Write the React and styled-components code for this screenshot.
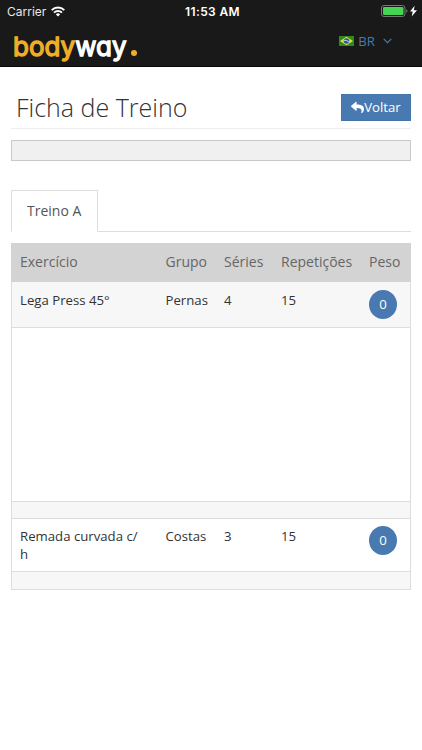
import React from 'react'
import styled, { createGlobalStyle } from 'styled-components'
import { FaReply } from 'react-icons/fa'

const exercises = [
  { name: 'Lega Press 45°', group: 'Pernas', sets: 4, reps: 15, weight: 0, height: 46, top: 9, shaded: true, media: true },
  { name: 'Remada curvada c/h', group: 'Costas', sets: 3, reps: 15, weight: 0, height: 53, top: 8 },
]

const Wifi = () => (
  <svg width="14" height="11" viewBox="0 0 14 11" fill="none" stroke="#fff" strokeWidth="1.9">
    <path d="M0.7 4.1a9 9 0 0 1 12.6 0" />
    <path d="M3 6.6a5.7 5.7 0 0 1 8 0" />
    <path d="M7 10.6L4.9 8.4a3 3 0 0 1 4.2 0z" fill="#fff" stroke="none" />
  </svg>
)

const Battery = () => (
  <svg width="36" height="13" viewBox="0 0 36 13">
    <rect x="0.5" y="0.5" width="23.5" height="11" rx="2.5" fill="none" stroke="#777" />
    <rect x="2" y="2" width="20.5" height="8" rx="1.2" fill="#45d553" />
    <path d="M25.2 4.3v3.4q1.3-.6 1.3-1.7t-1.3-1.7z" fill="#777" />
    <path d="M33.6 0.8L29 6.6h2.7l-1 4.8L36 5.2h-3.2z" fill="#fff" />
  </svg>
)

const Flag = () => (
  <svg width="15" height="10" viewBox="0 0 15 10">
    <rect width="15" height="10" fill="#2c8a22" />
    <path d="M7.5 0.7L14 5L7.5 9.3L1 5z" fill="#e5de3c" />
    <circle cx="7.5" cy="5" r="2.8" fill="#285a9f" />
    <path d="M4.9 4.3q3-.4 5.2 1.7" fill="none" stroke="#cfe2ee" strokeWidth="0.9" />
  </svg>
)

const App = () => {
  return (
    <>
      <GlobalStyle />
      <Header>
        <StatusBar>
          <Carrier>Carrier <Wifi /></Carrier>
          <Clock>11:53 AM</Clock>
          <Battery />
        </StatusBar>
        <NavBar>
          <Logo>
            <LogoPart $color="#f0ae27">body</LogoPart>
            <LogoPart $color="#fff">way</LogoPart>
            <LogoDot />
          </Logo>
          <Language>
            <Flag />
            <span>BR</span>
            <svg width="9" height="6" viewBox="0 0 9 6" fill="none" stroke="#467bb0" strokeWidth="1.2">
              <path d="M0.7 0.8l3.8 3.9l3.8-3.9" />
            </svg>
          </Language>
        </NavBar>
      </Header>

      <Content>
        <TitleRow>
          <Title>Ficha de Treino</Title>
          <BackButton><FaReply size={13} />Voltar</BackButton>
        </TitleRow>
        <InfoBar />
        <Tabs>
          <Tab>Treino A</Tab>
        </Tabs>

        <Table>
          <HeadRow>
            <span>Exercício</span>
            <span>Grupo</span>
            <span>Séries</span>
            <span>Repetições</span>
            <span>Peso</span>
          </HeadRow>
          {exercises.map(item => (
            <React.Fragment key={item.name}>
              <Row $height={item.height} $top={item.top} $shaded={item.shaded}>
                <Name>{item.name}</Name>
                <span>{item.group}</span>
                <span>{item.sets}</span>
                <span>{item.reps}</span>
                <Weight>{item.weight}</Weight>
              </Row>
              {item.media && <Media />}
              <Strip />
            </React.Fragment>
          ))}
        </Table>
      </Content>
    </>
  )
}

const GlobalStyle = createGlobalStyle`
  * { box-sizing: border-box; }
  body {
    margin: 0;
    background: #fff;
    color: #333;
    font-family: "Open Sans", sans-serif;
    font-size: 13.2px;
  }
  svg { display: block; flex-shrink: 0; }
`

const Header = styled.header`
  height: 67px;
  background: #191919;
  border-bottom: 1px solid #080808;
`

const StatusBar = styled.div`
  display: grid;
  grid-template-columns: 1fr auto 1fr;
  align-items: center;
  height: 22px;
  padding: 0 5px 0 7px;
  color: #fff;
  font-family: Inter, sans-serif;
  > svg { justify-self: end; }
`

const Carrier = styled.div`
  display: flex;
  align-items: center;
  gap: 5px;
  font-size: 12px;
  color: #e8e8e8;
`

const Clock = styled.div`
  font-size: 12px;
  font-weight: 600;
  letter-spacing: 0.35px;
  padding-left: 1px;
`

const NavBar = styled.nav`
  display: flex;
  justify-content: space-between;
  padding: 9px 30px 0 13px;
`

const Logo = styled.div`
  display: flex;
  align-items: baseline;
  line-height: 32px;
  font-family: Inter, sans-serif;
  font-size: 26px;
  font-feature-settings: "cv11";
`

const LogoPart = styled.span`
  color: ${props => props.$color};
  -webkit-text-stroke: 1.3px ${props => props.$color};
`

const LogoDot = styled.i`
  width: 6px;
  height: 6px;
  margin-left: 4px;
  border-radius: 50%;
  background: #f0ae27;
`

const Language = styled.div`
  display: flex;
  align-items: center;
  height: 15px;
  margin-top: 2px;
  color: #467bb0;
  svg:first-child { margin: 1px 0 0 -1px; }
  span { margin: 0 8px 0 4px; }
`

const Content = styled.main`
  padding: 0 11px;
`

const TitleRow = styled.div`
  display: flex;
  justify-content: space-between;
  height: 62px;
  padding: 27px 0 0 5px;
  margin-bottom: 11px;
  border-bottom: 1px solid #eee;
`

const Title = styled.h1`
  margin: 0;
  font-size: 25px;
  line-height: 26px;
  font-weight: 300;
`

const BackButton = styled.button`
  display: flex;
  align-items: center;
  justify-content: center;
  width: 70px;
  height: 27px;
  padding: 0 0 1px;
  border: 1px solid #4375ab;
  background: #487ab1;
  color: #fff;
  font-family: inherit;
  font-size: 13.2px;
`

const InfoBar = styled.div`
  height: 21px;
  border: 1px solid #c9c9c9;
  background: #f0f0f0;
`

const Tabs = styled.div`
  display: flex;
  height: 42px;
  margin: 29px 0 11px;
  border-bottom: 1px solid #ddd;
`

const Tab = styled.div`
  width: 87px;
  height: 42px;
  padding-left: 15px;
  line-height: 40px;
  border: 1px solid #ddd;
  border-bottom-color: #fff;
  color: #555;
  font-size: 14px;
`

const Table = styled.div`
  border: 1px solid #ddd;
  border-top: 0;
`

const HeadRow = styled.div`
  display: grid;
  grid-template-columns: 145.5px 58.5px 57px 88px 1fr;
  height: 39px;
  margin: 0 -1px;
  padding-left: 9px;
  line-height: 38px;
  background: #d3d3d3;
  color: #666;
  font-size: 14px;
`

const Row = styled.div`
  display: grid;
  grid-template-columns: 145.5px 58.5px 57px 88px 1fr;
  height: ${props => props.$height}px;
  padding: ${props => props.$top}px 0 0 8px;
  line-height: 18px;
  background: ${props => (props.$shaded ? '#f7f7f7' : '#fff')};
  border-bottom: 1px solid #ddd;
`

const Name = styled.span`
  width: 122px;
  word-break: break-all;
`

const Weight = styled.div`
  width: 28px;
  height: 29px;
  margin-top: -1px;
  border-radius: 50%;
  background: #487ab1;
  color: #fff;
  line-height: 28px;
  text-align: center;
`

const Media = styled.div`
  height: 174px;
  border-bottom: 1px solid #ddd;
`

const Strip = styled.div`
  height: 17px;
  background: #f7f7f7;
  border-bottom: 1px solid #ddd;
  &:last-child { border-bottom: 0; }
`

export default App
